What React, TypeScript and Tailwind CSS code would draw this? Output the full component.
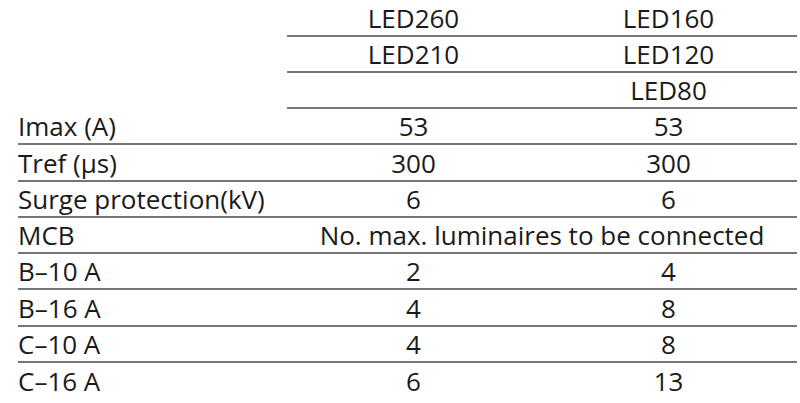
const headers = [
  ['LED260', 'LED160'],
  ['LED210', 'LED120'],
  ['', 'LED80'],
]

const rows: [string, string, string][] = [
  ['Imax (A)', '53', '53'],
  ['Tref (µs)', '300', '300'],
  ['Surge protection(kV)', '6', '6'],
]

const mcb: [string, string, string][] = [
  ['B–10 A', '2', '4'],
  ['B–16 A', '4', '8'],
  ['C–10 A', '4', '8'],
  ['C–16 A', '6', '13'],
]

// row heights, nudged so the rules land where the print has them
const tall = new Set([0, 4, 8])
const h = (i: number) => (tall.has(i) ? 'h-[37px]' : 'h-[36px]')
const line = 'border-b-2 border-[#767676]'

export default function App() {
  return (
    <div className="w-[800px] h-[403px] bg-white text-[#1a1a1a] text-[26px] leading-none" style={{ fontFamily: '"Open Sans", sans-serif' }}>
      <div className="ml-[18px] grid grid-cols-[269px_253px_257px]">
        {headers.map((r, i) => (
          <div key={i} className="contents">
            <div className={`${h(i)} flex items-center`} />
            <div className={`${h(i)} ${line} flex items-center justify-center`}>{r[0]}</div>
            <div className={`${h(i)} ${line} flex items-center justify-center`}>{r[1]}</div>
          </div>
        ))}
        {rows.map((r, j) => {
          const i = j + 3
          return (
            <div key={r[0]} className="contents">
              <div className={`${h(i)} ${line} flex items-center`}>{r[0]}</div>
              <div className={`${h(i)} ${line} flex items-center justify-center`}>{r[1]}</div>
              <div className={`${h(i)} ${line} flex items-center justify-center`}>{r[2]}</div>
            </div>
          )
        })}
        <div className={`${h(6)} ${line} flex items-center`}>MCB</div>
        <div className={`${h(6)} ${line} col-span-2 flex items-center justify-center`}>No. max. luminaires to be connected</div>
        {mcb.map((r, j) => {
          const i = j + 7
          const b = j < mcb.length - 1 ? line : ''
          return (
            <div key={r[0]} className="contents">
              <div className={`${h(i)} ${b} flex items-center`}>{r[0]}</div>
              <div className={`${h(i)} ${b} flex items-center justify-center`}>{r[1]}</div>
              <div className={`${h(i)} ${b} flex items-center justify-center`}>{r[2]}</div>
            </div>
          )
        })}
      </div>
    </div>
  )
}
